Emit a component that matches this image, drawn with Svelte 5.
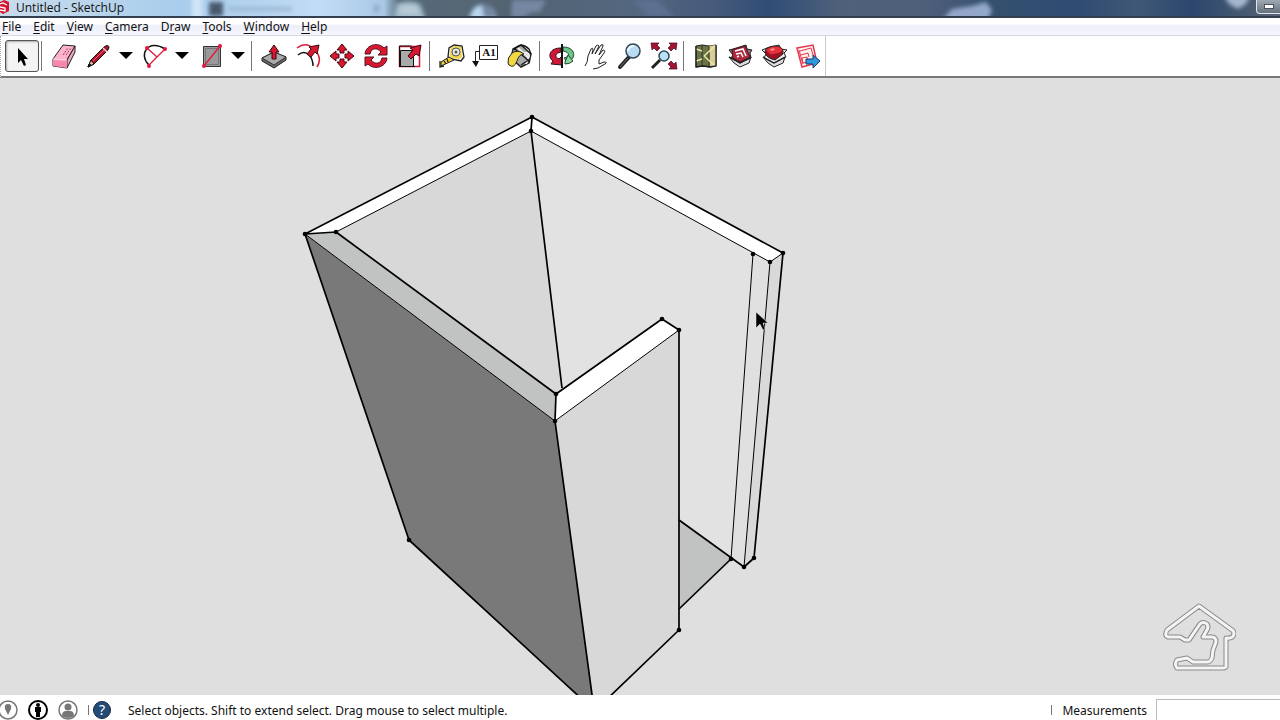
<script>
	const menus = ['File', 'Edit', 'View', 'Camera', 'Draw', 'Tools', 'Window', 'Help'];
	// letter of each menu that carries the access key underline
	const accessKeys = { Draw: 1 };

	const toolGroups = [
		[{ id: 'select', label: 'Select' }],
		[
			{ id: 'eraser', label: 'Eraser' },
			{ id: 'pencil', label: 'Line', more: true },
			{ id: 'arc', label: 'Arc', more: true },
			{ id: 'rect', label: 'Rectangle', more: true }
		],
		[
			{ id: 'push', label: 'Push/Pull' },
			{ id: 'offset', label: 'Offset' },
			{ id: 'move', label: 'Move' },
			{ id: 'rotate', label: 'Rotate' },
			{ id: 'scale', label: 'Scale' }
		],
		[
			{ id: 'tape', label: 'Tape Measure' },
			{ id: 'text', label: 'Text' },
			{ id: 'paint', label: 'Paint Bucket' }
		],
		[
			{ id: 'orbit', label: 'Orbit' },
			{ id: 'pan', label: 'Pan' },
			{ id: 'zoom', label: 'Zoom' },
			{ id: 'extents', label: 'Zoom Extents' }
		],
		[
			{ id: 'map', label: 'Add Location' },
			{ id: 'warehouse', label: '3D Warehouse' },
			{ id: 'extension', label: 'Extension Warehouse' },
			{ id: 'layout', label: 'Send to LayOut' }
		]
	];

	const vertices = [
		[532, 117], [531, 131], [305, 234], [336, 232], [556, 394], [555, 421],
		[662, 319], [679, 330], [753, 254], [770, 262], [783, 253],
		[409, 540], [679, 630], [731, 559], [744, 567], [754, 558]
	];

	const house =
		'M37 4L5 28q-3 6 1 7h12l5 3h4L38 22q3-3 7 0 2 3 0 6l-4 7h9q4 0 4 5l-3 8-1 8q-2 4-4 4H31l-6-4-10 2q-3 4 0 8h47l2-1V36q7 1 8-4 0-3-2-4z';

	let active = 'select';
	let measurement = '';
</script>

<div class="app">
	<header class="titlebar">
		<svg class="backdrop" viewBox="0 0 1280 16" preserveAspectRatio="none" aria-hidden="true">
			<defs>
				<linearGradient id="glass" x1="0" x2="1" y1="0" y2="0">
					<stop offset="0" stop-color="#c9dcec" />
					<stop offset="0.06" stop-color="#bcd6ec" />
					<stop offset="0.14" stop-color="#a9cdec" />
					<stop offset="0.2" stop-color="#b4d3ee" />
					<stop offset="0.25" stop-color="#c2dcf5" />
					<stop offset="0.3" stop-color="#a9c9e6" />
					<stop offset="0.312" stop-color="#586b7a" />
					<stop offset="0.4" stop-color="#536372" />
					<stop offset="0.5" stop-color="#536780" />
					<stop offset="0.56" stop-color="#46597a" />
					<stop offset="0.6" stop-color="#2f4d76" />
					<stop offset="0.66" stop-color="#50627b" />
					<stop offset="0.72" stop-color="#4f607a" />
					<stop offset="0.78" stop-color="#34506f" />
					<stop offset="0.84" stop-color="#2f4b72" />
					<stop offset="0.89" stop-color="#3f5876" />
					<stop offset="0.93" stop-color="#2b476d" />
					<stop offset="1" stop-color="#576474" />
				</linearGradient>
				<filter id="soft" x="-20%" y="-50%" width="140%" height="200%">
					<feGaussianBlur stdDeviation="2" />
				</filter>
			</defs>
			<rect width="1280" height="16" fill="url(#glass)" />
			<g filter="url(#soft)">
				<rect x="192" y="-4" width="10" height="24" fill="#d0e5f8" />
				<rect x="209" y="2" width="14" height="14" fill="#46586c" />
				<rect x="228" y="7" width="64" height="4" fill="#9dbad4" />
				<rect x="374" y="5" width="5" height="7" fill="#8aa8c8" />
				<path d="M394 20l2-16q13-5 24 0l6 16z" fill="#a3bccd" />
				<path d="M398 14l4-8h14l3 8z" fill="#b9cad6" />
				<path d="M469 20q3-16 14-15 12 0 14 15z" fill="#b8d8ef" />
				<path d="M481 3l10 4 7 11h-14zM512 0h34l-6 12-10 1-7 5h-12z" fill="#7587a3" />
				<path d="M632 0h26l16 17h-26z" fill="#5b6f90" />
				<path d="M942 20l10-11 20-3 14-4 6 8-4 10z" fill="#93a7cb" />
				<path d="M1224 -4h26l-4 8-8 5-9-5z" fill="#a5b6cf" />
			</g>
		</svg>
		<svg class="logo" viewBox="0 0 14 16" aria-hidden="true">
			<path d="M0 2l4-2 5 2v9l-6 3-3-2z" fill="#d5142f" />
			<path d="M0 4l3-1 4 2M0 7l5 1v3l-5-1" fill="none" stroke="#fff" stroke-width="1.3" />
		</svg>
		<h1>Untitled - SketchUp</h1>
		<button class="minimise" aria-label="Minimise"><span></span></button>
	</header>

	<nav class="menubar" aria-label="Main menu">
		{#each menus as menu}
			{@const key = accessKeys[menu] ?? 0}
			<button>{menu.slice(0, key)}<u>{menu[key]}</u>{menu.slice(key + 1)}</button>
		{/each}
	</nav>

	<div class="toolbar" role="toolbar" aria-label="Getting started">
		{#each toolGroups as group}
			<div class="group">
				{#each group as tool}
					<button
						class="tool"
						class:active={active === tool.id}
						aria-label={tool.label}
						on:click={() => (active = tool.id)}
					>
						<svg viewBox="0 0 28 28" aria-hidden="true">
							{#if tool.id === 'select'}
								<path d="M10 6v15l3-3 3 6 2-1-2-6h4z" fill="#000" />
							{:else if tool.id === 'eraser'}
								<path d="M3 17L13 3l12 1-7 12-1 10-14-2z" fill="#ffb3cb" stroke="#222" />
								<path d="M17 18v8l8-16V4z" fill="#e7a8bc" stroke="#222" />
								<path d="M3 18l14 1v7l-14-2z" fill="#f887ae" />
								<path d="M3 17l14 1" stroke="#fbd5e0" />
								<path d="M13 13l5-7M16 13l5-7" stroke="#9b3457" stroke-dasharray="2 1" />
							{:else if tool.id === 'pencil'}
								<path d="M4 25l3-7L20 5q4-3 5 0 0 2-2 4L10 22z" fill="#b5122b" stroke="#111" />
								<path d="M7 18l3 4-6 3z" fill="#e8bb96" stroke="#111" />
								<path d="M4 25l3-2-2-1z" fill="#111" stroke="#111" />
								<path d="M9 19L21 7" stroke="#ed6070" />
								<path d="M19 6l4 4" stroke="#ddd" stroke-width="1.500" />
							{:else if tool.id === 'arc'}
								<path d="M9 23C-2 13 8-4 25 7" fill="none" stroke="#111" stroke-width="1.500" />
								<path d="M9 23L25 7M7 6l10 9" fill="none" stroke="#e3173e" stroke-width="1.300" />
								<g fill="#e3173e"><circle cx="9" cy="24" r="2" /><circle cx="25" cy="7" r="2" /><circle cx="7" cy="6" r="2" /></g>
							{:else if tool.id === 'rect'}
								<path d="M7.500 4.500h17v20h-17z" fill="#999" stroke="#333" />
								<path d="M9.500 6.500h13v16h-13z" fill="none" stroke="#777" />
								<path d="M8 24L24 4" stroke="#e3173e" stroke-width="1.300" />
								<g fill="#e3173e"><circle cx="8" cy="24" r="2" /><circle cx="24" cy="4" r="2" /></g>
							{:else if tool.id === 'push'}
								<path d="M2 16l12-6 12 5v3l-12 8-12-7z" fill="#666" stroke="#222" />
								<path d="M2 16l12-6 12 5-12 8z" fill="#aaa" stroke="#333" />
								<path d="M12 17V10H9l5-7 5 7h-3v7z" fill="#d81731" stroke="#3b0710" />
							{:else if tool.id === 'offset'}
								<path d="M4 13q6-5 11 0 4 4 4 11" fill="none" stroke="#111" stroke-width="1.500" />
								<path d="M3 6q9-7 17 1 9 9 3 18" fill="none" stroke="#d81738" stroke-width="1.500" />
								<path d="M13 12l4-5-2-2 10-2-2 9-2-2-4 5z" fill="#d81731" stroke="#3b0710" />
							{:else if tool.id === 'move'}
								<g fill="#d81731" stroke="#4a0710">
									<path d="M14 2l5 6h-3v3h-4V8H9z" />
									<path d="M14 26l5-6h-3v-3h-4v3H9z" />
									<path d="M2 14l6-5v3h3v4H8v3z" />
									<path d="M26 14l-6-5v3h-3v4h3v3z" />
								</g>
							{:else if tool.id === 'rotate'}
								<g fill="#d81731" stroke="#54101b">
									<path d="M3 12C4 2 17 0 22 6l3-2v9h-9l3-3C15 5 9 6 8 12z" />
									<path d="M25 16c-1 10-14 12-19 6l-3 2v-9h9l-3 3c4 5 10 4 11-2z" />
								</g>
							{:else if tool.id === 'scale'}
								<path d="M3.500 4.500h20v20h-20z" fill="#fff" stroke="#d81738" stroke-width="1.500" />
								<path d="M4.500 8.500h13v16h-13z" fill="#aaa" stroke="#111" />
								<path d="M3.500 25v-21h12M3 24.500h16" stroke="#111" />
								<path d="M12 14l5-6-3-2 11-3-2 11-3-2-5 5z" fill="#d81731" stroke="#3b0710" />
							{:else if tool.id === 'tape'}
								<path d="M10 15l1-9 5-3 8 1 2 11-3 4-10-2z" fill="#eee" stroke="#222" stroke-width="1.300" />
								<path d="M12 14l1-8 4-2 6 1 1 10-3 2-7-1z" fill="#eed647" />
								<circle cx="18" cy="10" r="4" fill="#eee" stroke="#555" /><circle cx="18" cy="10" r="1.500" fill="#555" />
								<path d="M11 15l-8 5v4l13-6z" fill="#eed238" stroke="#222" />
								<path d="M2 19v6l4-1M6 19l2 3M9 17l1 3" fill="none" stroke="#222" stroke-width="1.300" />
							{:else if tool.id === 'text'}
								<path d="M7.500 3.500h18v14h-18z" fill="#fff" stroke="#222" />
								<path d="M7 9.500H3.500V20" fill="none" stroke="#222" />
								<path d="M0 19h7l-3 6z" fill="#111" />
								<text x="17" y="14" text-anchor="middle">A1</text>
							{:else if tool.id === 'paint'}
								<path d="M7 7l8-4 10 9-2 9-8 4-10-9z" fill="#aaa" stroke="#222" stroke-width="1.500" />
								<path d="M12 6l11 10M17 12q5-3 6 2l-3 8" fill="none" stroke="#eee" stroke-width="2" />
								<path d="M8 8q7-9 15-1l2 5M9 7l15 13" fill="none" stroke="#111" stroke-width="1.300" />
								<path d="M2 21q-1-5 4-10 6-4 12 1-5 0-7 7-3 8-8 4z" fill="#efd842" stroke="#222" />
								<path d="M15 23l9-6" stroke="#222" stroke-width="1.500" />
							{:else if tool.id === 'orbit'}
								<path d="M15 5c13 0 14 12 4 15l-3-4c6-1 6-6-1-7z" fill="#6fc38b" stroke="#1b4729" />
								<path d="M13 6C0 6 0 16 5 19l-2 3 11 1v-9l-3 3c-5-2-4-6 2-7z" fill="#cf1737" stroke="#32131b" />
								<path d="M17 20l3-7 5 6q-3 3-8 3z" fill="#8bd9a0" stroke="#1b4729" />
								<path d="M14 2v24" stroke="#111" stroke-width="2" />
							{:else if tool.id === 'pan'}
								<path
									d="M3 24q3-4 3-10l3-7q2-2 2 1l-1 4 4-8q2-2 3 0l-4 8 6-9q3-1 2 1l-4 9 4-5q3 0 1 3l-5 7v4l5-2q4 0 1 2l-7 4-5 1"
									fill="#fff"
									stroke="#222"
									stroke-linejoin="round"
								/>
							{:else if tool.id === 'zoom'}
								<path d="M4 25l9-10" stroke="#222" stroke-width="4" stroke-linecap="round" />
								<path d="M4 25l8-9" stroke="#777" />
								<circle cx="17" cy="9" r="7" fill="#b9dcf3" stroke="#334756" stroke-width="1.500" />
								<path d="M12 9q1-5 6-5" fill="none" stroke="#eef9ff" stroke-width="2" />
							{:else if tool.id === 'extents'}
								<g fill="#a31335" stroke="#410819" stroke-width="0.700">
									<path d="M1 1h8L7 3l3 3-3 3-3-3-2 2z" />
									<path d="M27 1h-8l2 2-3 3 3 3 3-3 2 2z" />
									<path d="M27 27h-8l2-2-3-3 3-3 3 3 2-2z" />
								</g>
								<path d="M2 26l8-8" stroke="#222" stroke-width="3" />
								<circle cx="14" cy="14" r="5" fill="#b9e2f5" stroke="#334756" stroke-width="1.500" />
							{:else if tool.id === 'map'}
								<path d="M4 4l6-1 7 1 7-1v21l-6 1-7-1-7 1z" fill="#6b7446" stroke="#222" />
								<path d="M17 4l7-1v21l-6 1z" fill="#d6cf91" />
								<path d="M10 3v21M17 4v21" stroke="#333" />
								<path d="M4 7l6 2M12 14L23 4M12 14l11 10M4 19l6-2" fill="none" stroke="#eee5a4" stroke-width="1.500" />
								<path d="M24 3v21l-6 1-7-1-7 1V4" fill="none" stroke="#222" stroke-width="1.300" />
							{:else if tool.id === 'warehouse'}
								<path d="M3 15l5 6 6 4 9-4 2-6-10 5z" fill="#ddd" stroke="#222" />
								<path d="M3 8l4-1 13-4 1 4 5 1-2 3 1 5-11 5-9-5 2-3z" fill="#8b6f73" stroke="#222" />
								<path d="M6 8l13-4 5 11-10 5-7-4z" fill="#b02a3f" stroke="#4b1620" />
								<path d="M9 9l8-2 3 7M10 12l5-1 2 4M11 15l2-1" fill="none" stroke="#fff" stroke-width="1.500" />
								<path d="M3 15l11 6 11-6" fill="none" stroke="#222" stroke-width="1.300" />
							{:else if tool.id === 'extension'}
								<path d="M3 15l5 6 6 4 9-4 2-6-10 5z" fill="#ddd" stroke="#222" />
								<path d="M2 8l5-2 12-3 2 4 6 1-3 3 2 4-12 6-10-5 2-4z" fill="#eee" stroke="#222" />
								<path d="M5 10q0-5 9-6 8 0 9 5v3l-8 6q-9-2-10-8z" fill="#9b1424" stroke="#222" />
								<path d="M6 8q6-5 13-3 4 2 3 4-6 4-12 3z" fill="#e4313c" />
								<path d="M10 7l4-1 1 2-4 1z" fill="#ff8c85" />
								<path d="M3 15l11 6 11-6" fill="none" stroke="#222" stroke-width="1.300" />
							{:else}
								<path d="M3 6l16-3 4 18-15 4z" fill="#fff0f0" stroke="#e1374c" stroke-width="1.500" />
								<path d="M6 9l11-3 2 7M7 13l7-2 1 4M5 8l4 14M9 21l5-1-1-5-5 1z" fill="none" stroke="#e1374c" />
								<path d="M12 17h7v-4l7 6-7 7v-4h-7z" fill="#3197df" stroke="#123c62" />
							{/if}
						</svg>
					</button>
					{#if tool.more}
						<button class="more" aria-label="{tool.label} tools">
							<svg viewBox="0 0 14 8" aria-hidden="true"><path d="M0 0h14L7 7z" /></svg>
						</button>
					{/if}
				{/each}
			</div>
		{/each}
	</div>

	<main class="viewport">
		<svg class="model" viewBox="0 78 1280 617" preserveAspectRatio="xMidYMid slice" role="img" aria-label="Model">
			<!-- inside faces and floor -->
			<path d="M531 131L770 262 744 567 679 520V609L555 560z" fill="#e2e2e2" />
			<path d="M679 520L731 559 679 609z" fill="#c0c3c2" />
			<path d="M531 131L336 232 556 394 562 388z" fill="#d8d8d8" />
			<path d="M753 254L770 262 744 567 731 559z" fill="#e0e0e0" />
			<path d="M770 262L783 253 754 558 744 567z" fill="#d9d9d9" />

			<!-- outside faces -->
			<path d="M305 234L555 421 594 702H585L409 540z" fill="#797979" />
			<path d="M555 421L679 330V630L604 702H593z" fill="#d8d8d8" />

			<!-- top edges of the walls -->
			<path d="M305 234L532 117 531 131 336 232z" fill="#fff" />
			<path d="M532 117L783 253 770 262 531 131z" fill="#fff" />
			<path d="M305 234L336 232 556 394 555 421z" fill="#c0c3c2" />
			<path d="M556 394L662 319 679 330 555 421z" fill="#fff" />

			<g fill="none" stroke="#000" stroke-linejoin="round">
				<path d="M336 232L531 131 770 262 744 567" />
				<path d="M305 234L555 421 679 330" />
				<path d="M753 254L731 559M770 262L783 253" />
			</g>
			<g fill="none" stroke="#000" stroke-width="1.700" stroke-linejoin="round">
				<path d="M305 234L532 117 783 253 754 558 744 567 679 520" />
				<path d="M532 117L531 131 562 388" />
				<path d="M305 234L336 232 556 394 662 319 679 330V630L604 702" />
				<path d="M556 394L555 421 593 702M305 234L409 540 585 702" />
				<path d="M731 559L679 609" />
			</g>
			{#each vertices as [x, y]}
				<circle cx={x} cy={y} r="2.300" />
			{/each}

			<path d="M756 312v16l4-4 3 6 2-1-2-6h5z" fill="#000" stroke="#eee" stroke-width="0.500" />
		</svg>

		<svg class="watermark" viewBox="0 0 74 70" aria-hidden="true">
			<path d={house} />
			<path class="inner" d={house} />
		</svg>
	</main>

	<footer class="statusbar">
		<button aria-label="Geo-location">
			<svg viewBox="0 0 20 20" aria-hidden="true">
				<circle cx="10" cy="10" r="9" fill="#fff" stroke="#777" stroke-width="1.500" />
				<path d="M10 15L7 9q-1-5 3-5t3 5z" fill="#777" />
			</svg>
		</button>
		<button aria-label="Credits">
			<svg viewBox="0 0 20 20" aria-hidden="true">
				<circle cx="10" cy="10" r="9" fill="#fff" stroke="#000" stroke-width="2" />
				<circle cx="10" cy="5" r="2" />
				<path d="M7 7h6v5h-1v5H8v-5H7z" />
			</svg>
		</button>
		<button aria-label="Sign in">
			<svg viewBox="0 0 20 20" aria-hidden="true">
				<circle cx="10" cy="10" r="9" fill="#fff" stroke="#777" stroke-width="1.500" />
				<circle cx="10" cy="7" r="3.500" fill="#777" />
				<path d="M4 16q0-5 4-5h4q4 0 4 5-6 4-12 0z" fill="#777" />
			</svg>
		</button>
		<span class="divider"></span>
		<button class="help" aria-label="Help">?</button>
		<p>Select objects. Shift to extend select. Drag mouse to select multiple.</p>
		<span class="divider last"></span>
		<label for="measurements">Measurements</label>
		<input id="measurements" type="text" bind:value={measurement} />
	</footer>
</div>

<style>
	:global(body) {
		margin: 0;
		background: #dfdfdf;
	}

	.app {
		display: flex;
		flex-direction: column;
		height: 100vh;
		font-family: 'Noto Sans', 'Open Sans', sans-serif;
		font-size: 12px;
		line-height: 16px;
		color: #111;
	}

	button {
		padding: 0;
		border: 0;
		background: none;
		font: inherit;
		color: inherit;
	}

	svg {
		display: block;
	}

	.titlebar {
		position: relative;
		display: flex;
		flex: none;
		height: 16px;
		border-bottom: 2px solid #465365;
		border-image: linear-gradient(#c5ccd6 50%, #344052 50%) 2;
		border-width: 0 0 2px;
	}

	.backdrop {
		position: absolute;
		width: 100%;
		height: 100%;
	}

	.logo {
		position: relative;
		width: 14px;
		height: 16px;
		margin-right: 2px;
	}

	h1 {
		position: relative;
		flex: 1;
		margin: 0;
		font-family: 'Open Sans', sans-serif;
		font-size: 12px;
		font-weight: 400;
		line-height: 16px;
	}

	.minimise {
		position: relative;
		display: flex;
		align-items: center;
		justify-content: center;
		width: 24px;
		height: 14px;
		border: 1px solid #e0e5ec;
		border-width: 0 0 1px 1px;
		border-radius: 0 0 0 4px;
		background: linear-gradient(#a0a9b3, #65717e);
	}

	.minimise span {
		width: 10px;
		height: 5px;
		background: #fff;
		border: 1px solid #49535f;
		box-sizing: border-box;
	}

	.menubar {
		display: flex;
		flex: none;
		gap: 12px;
		height: 18px;
		padding: 1px 0 0 2px;
		box-sizing: border-box;
		border-bottom: 1px solid #d5d7e2;
		background: linear-gradient(#fff 0 35%, #edeffa 45%, #f5f6fd);
	}

	.menubar u {
		text-underline-offset: 2px;
	}

	.toolbar {
		display: flex;
		flex: none;
		height: 40px;
		padding-left: 4px;
		border-left: 1px dotted #aaa;
		border-bottom: 2px solid #777;
		background: #fff;
	}

	.group {
		display: flex;
		align-items: center;
	}

	.group + .group::before {
		content: '';
		width: 1px;
		height: 30px;
		margin: 0 5px 0 2px;
		background: #777;
	}

	.group:last-child {
		border-right: 1px solid #ccc;
	}

	.tool {
		display: grid;
		place-items: center;
		width: 34px;
		height: 32px;
		box-sizing: border-box;
	}

	.tool.active {
		border: 1px solid #555;
		border-radius: 3px;
		background: #f4f4f4;
		box-shadow: inset 1px 1px 2px #aaa;
	}

	.tool svg {
		width: 28px;
		height: 28px;
		fill: none;
	}

	.tool text {
		fill: #111;
		font: 700 11px 'Liberation Serif', serif;
	}

	.more {
		display: grid;
		place-items: center;
		width: 22px;
		height: 32px;
	}

	.more svg {
		width: 14px;
		height: 8px;
	}

	.viewport {
		position: relative;
		flex: 1;
		min-height: 0;
		background: #dfdfdf;
	}

	.model {
		width: 100%;
		height: 100%;
	}

	.watermark {
		position: absolute;
		right: 44px;
		bottom: 23px;
		width: 74px;
		height: 70px;
		fill: none;
		stroke: #8a8a8a;
		stroke-width: 5px;
		stroke-linejoin: round;
	}

	.watermark .inner {
		stroke: #f4f4f4;
		stroke-width: 3px;
	}

	.statusbar {
		display: flex;
		flex: none;
		align-items: center;
		height: 25px;
		padding-top: 4px;
		box-sizing: border-box;
		background: #fff;
	}

	.statusbar button {
		flex: none;
		width: 20px;
		height: 20px;
		margin-right: 10px;
	}

	.statusbar button:first-child {
		margin-left: -2px;
	}

	.divider {
		flex: none;
		width: 1px;
		height: 10px;
		margin-right: 4px;
		background: #777;
	}

	.statusbar .help {
		width: 18px;
		height: 18px;
		margin-right: 17px;
		border: 1px solid #12283f;
		border-radius: 50%;
		background: #234b77;
		color: #fff;
		font-size: 14px;
		line-height: 16px;
	}

	.statusbar p,
	.statusbar label {
		padding-top: 3px;
	}

	.statusbar p {
		flex: 1;
		margin: 0;
	}

	.divider.last {
		margin-right: 10px;
	}

	.statusbar input {
		align-self: stretch;
		width: 124px;
		padding: 0 4px;
		border: 1px solid #bbb;
		border-width: 1px 0 0 1px;
		margin-left: 9px;
		box-sizing: border-box;
		font: inherit;
	}
</style>
